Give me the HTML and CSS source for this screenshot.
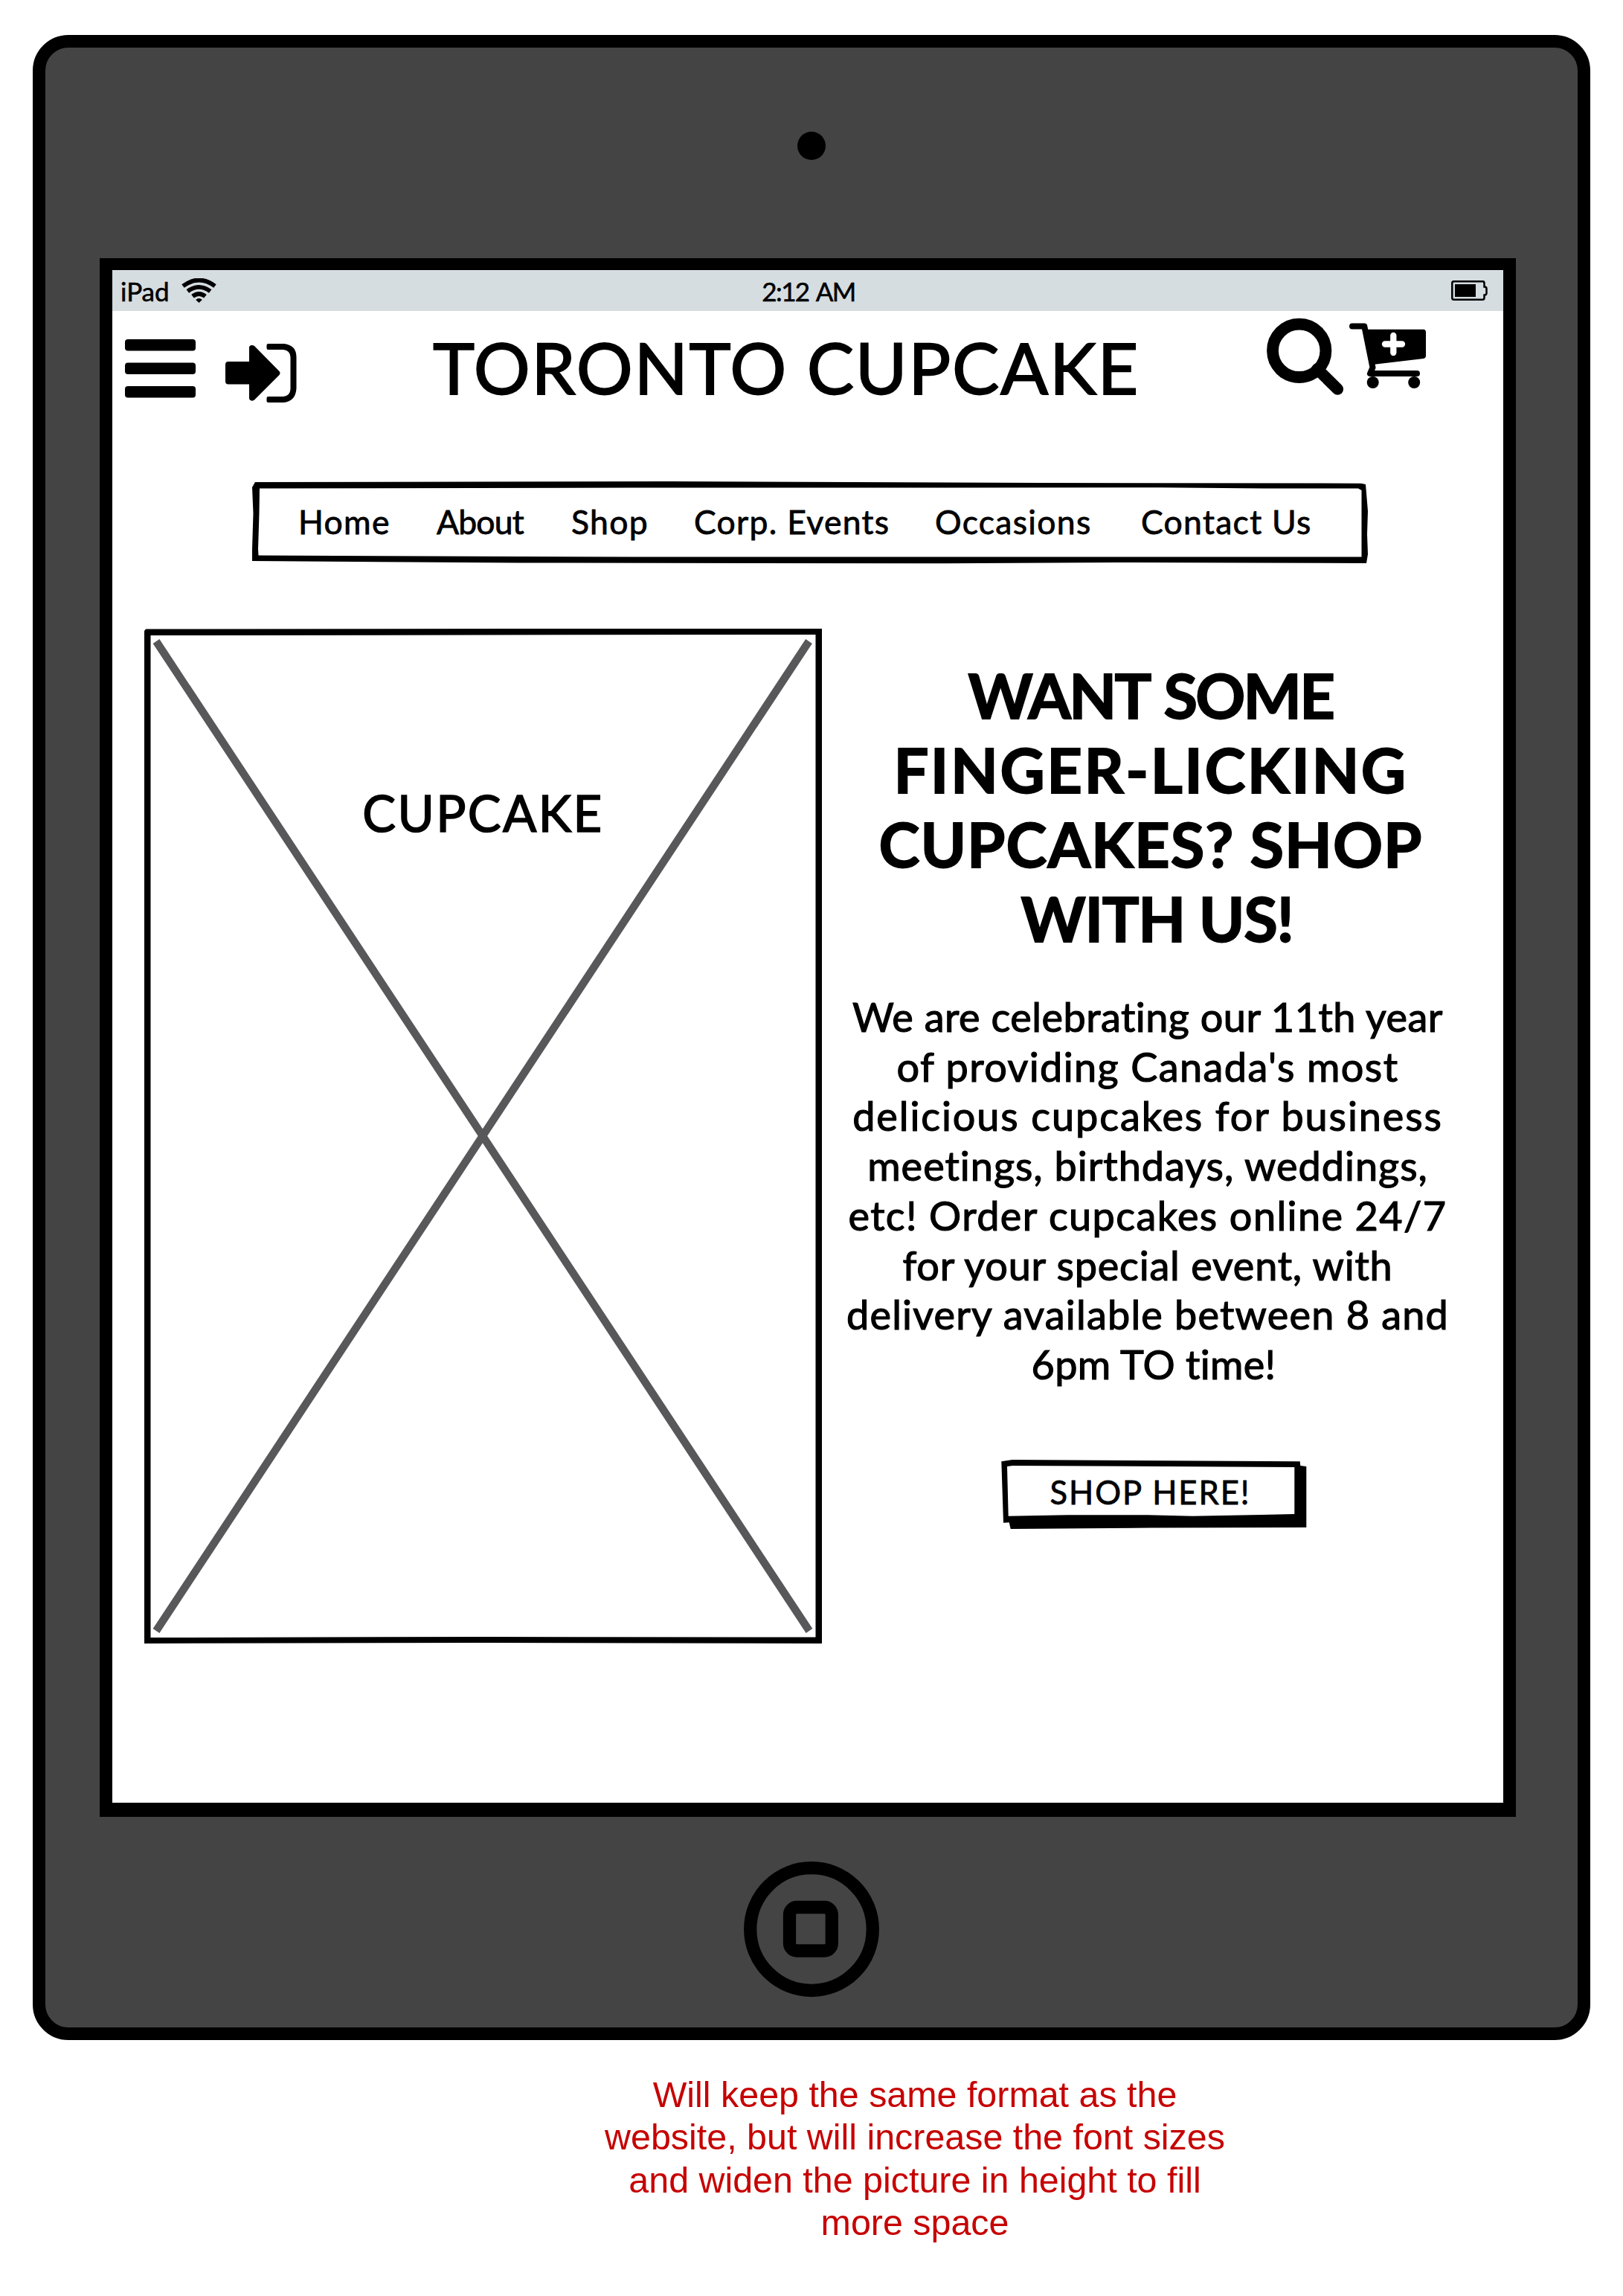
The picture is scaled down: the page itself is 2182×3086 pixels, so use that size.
FILE: index.html
```html
<!DOCTYPE html>
<html lang="en">
<head>
<meta charset="utf-8">
<title>Toronto Cupcake</title>
<link rel="stylesheet" href="styles.css">
</head>
<body>
<div class="device">
  <div class="camera"></div>
  <div class="screen">
    <div class="status">
      <div class="status-left">
        <span>iPad</span>
        <svg class="wifi" width="47" height="34" viewBox="0 0 47 34" fill="none" stroke="#000" stroke-width="5.8">
          <path d="M2 10.5Q23.500 -5.500 45 10.500M8.300 17.500Q23.500 6.300 38.700 17.500M15 24.300Q23.500 17.700 32 24.300"/>
          <path d="M19.200 29Q23.500 25.200 27.800 29L23.500 33Z" fill="#000" stroke="none"/>
        </svg>
      </div>
      <span class="time">2:12 AM</span>
      <svg class="battery" width="49" height="28" viewBox="0 0 49 28">
        <path d="M4 1.200H42Q44.500 1.200 44.500 3.500V8.500H45.500Q47.500 9 47.500 11V17Q47.500 19 45.500 19.500H44.500V23.500Q44.500 25.800 42 25.800H4Q1.300 25.800 1.300 23.500V3.500Q1.300 1.200 4 1.200Z" fill="none" stroke="#000" stroke-width="2.500"/>
        <rect x="5" y="5" width="28" height="17"/>
      </svg>
    </div>

    <header class="header">
      <svg class="menu" width="95" height="80" viewBox="0 0 95 80">
        <rect width="95" height="15.500" rx="4"/><rect y="31.500" width="95" height="15.500" rx="4"/><rect y="63" width="95" height="15.500" rx="4"/>
      </svg>
      <svg class="login" width="96" height="80" viewBox="0 0 96 80">
        <path d="M4 24H32V5Q32 2.500 35 2Q37.500 1.800 39 3L72.500 37Q74.500 39.500 72.500 42L39 75.500Q37 77 35 76.500Q32 75.500 32 73V54.500H4Q0 54.500 0 50.500V28Q0 24 4 24Z"/>
        <path d="M57.500 0H79Q95.500 2 95.500 18V60Q94.500 77 79 79H57.500Q55.500 79 55.500 77V73Q55.500 71 57.500 71H78Q87 70 87.500 61V18Q87 9 78 8H57.500Q55.500 8 55.500 6V2Q55.500 0 57.500 0Z"/>
      </svg>
      <h1 class="title">TORONTO CUPCAKE</h1>
      <svg class="search" width="104" height="105" viewBox="0 0 104 105" fill="none" stroke="#000">
        <circle cx="43.700" cy="44.300" r="35.700" stroke-width="15.800"/>
        <path d="M68 69L95.300 96" stroke-width="15.600" stroke-linecap="round"/>
      </svg>
      <svg class="cart" width="104" height="88" viewBox="0 0 104 88">
        <path d="M4 4.500H20.300L31.500 60L28 68H91" fill="none" stroke="#000" stroke-width="8" stroke-linecap="round" stroke-linejoin="round"/>
        <path d="M20 8.700H99.500Q103 9 103 12.500V44Q103 47.500 99.500 48L34 55.700L28 55Z"/>
        <circle cx="31.700" cy="80" r="8"/><circle cx="87.200" cy="80" r="8"/>
        <path d="M59.300 17V40M48 28.500H71" stroke="#fff" stroke-width="8.300" stroke-linecap="round"/>
      </svg>
    </header>

    <nav class="nav">
      <svg class="sketch" width="1503" height="111" viewBox="337 647 1503 111">
        <path fill-rule="evenodd" d="M343 648L900 647L1400 649L1830 649.700L1836 651L1839 687L1838 718L1839 745L1837 757L1500 756L1250 757.300L700 756.500L550 755.500L339 754V738L340.500 690L339 655ZM349 656.500L850 655.500H1100L1560 655.300L1700 656.500H1826L1830.500 659V748.500H850L450 747L347.500 746.500L347 738L348.500 690Z"/>
      </svg>
      <a>Home</a><a class="tight">About</a><a>Shop</a><a>Corp. Events</a><a>Occasions</a><a>Contact Us</a>
    </nav>

    <main class="main">
      <div class="picture">
        <svg class="sketch" width="911" height="1364" viewBox="194 845 911 1364">
          <path d="M210 862L1088 2192M1087.500 862L210 2192" stroke="#58585a" stroke-width="10.500"/>
          <path fill-rule="evenodd" d="M196 845.500L700 845L1105 844V2209L650 2208L194 2209V848ZM202.500 854L1096.500 853V2200.500L650 2200L202.500 2201Z"/>
        </svg>
        <span class="picture-label">CUPCAKE</span>
      </div>
      <section class="copy">
        <h2 class="pitch"><span>WANT SOME</span><span>FINGER-LICKING</span><span>CUPCAKES? SHOP</span><span>WITH US!</span></h2>
        <p class="story"><span>We are celebrating our 11th year</span><span>of providing Canada's most</span><span>delicious cupcakes for business</span><span>meetings, birthdays, weddings,</span><span>etc! Order cupcakes online 24/7</span><span>for your special event, with</span><span>delivery available between 8 and</span><span>6pm TO time!</span></p>
        <a class="shop">
          <svg class="sketch" width="411" height="93" viewBox="0 0 411 93">
            <path fill-rule="evenodd" d="M.3 2.300L15 0L401.700 2.300L402.300 8L410.300 9V91L200 91.500L12.700 93L10.700 84.300L3 84.700ZM8 9L15.300 8L394.300 10V73L350 74L257 75.700L197 74.300H90L9.700 75.700Z"/>
          </svg>
          <span>SHOP HERE!</span>
        </a>
      </section>
    </main>
  </div>
  <svg class="home" width="182" height="182" viewBox="0 0 182 182" fill="none" stroke="#000" stroke-width="17.300">
    <circle cx="91" cy="91" r="82.300"/>
    <rect x="61.500" y="61.500" width="56.800" height="58.500" rx="10"/>
  </svg>
</div>
<p class="note">Will keep the same format as the<br>website, but will increase the font sizes<br>and widen the picture in height to fill<br>more space</p>
</body>
</html>
```
FILE: styles.css
```css
* { box-sizing: border-box; }
body {
  margin: 0;
  padding: 47px 44px 0;
  background: #fff;
  color: #000;
  font-family: Lato, sans-serif;
}
svg { display: block; flex: none; }
h1, h2, p { margin: 0; font-weight: 400; }

.device {
  width: 2094px;
  height: 2695px;
  border: 17px solid #000;
  border-radius: 48px;
  background: #444;
  display: flex;
  flex-direction: column;
  align-items: center;
}
.camera {
  width: 38px;
  height: 38px;
  margin-top: 113px;
  border-radius: 50%;
  background: #000;
}
.screen {
  align-self: flex-start;
  width: 1904px;
  height: 2095px;
  margin: 132px 0 0 73px;
  border: solid #000;
  border-width: 16px 17px 19px;
  background: #fff;
}
.home { margin-top: 60px; }

.status {
  height: 55px;
  padding: 0 21px 0 11px;
  background: #d6dde0;
  display: grid;
  grid-template-columns: 1fr auto 1fr;
  align-items: center;
  font-size: 35px;
  line-height: 52px;
  -webkit-text-stroke: .6px #000;
}
.status-left { display: flex; align-items: center; gap: 16px; }
.time { letter-spacing: -1.6px; word-spacing: 3px; margin-left: 12px; }
.battery { justify-self: end; }

.header {
  height: 229px;
  padding: 0 103px 0 17px;
  display: flex;
  align-items: flex-start;
}
.menu { margin-top: 38px; }
.login { margin: 44px 0 0 40px; }
.title {
  flex: 1;
  margin: 25px 0 0 183px;
  font-size: 95px;
  line-height: 100px;
  letter-spacing: 1.6px;
  white-space: nowrap;
  -webkit-text-stroke: 1.8px #000;
}
.search { margin-top: 9px; }
.cart { margin: 16px 0 0 7px; }

.sketch { position: absolute; inset: 0; }
.nav {
  position: relative;
  width: 1503px;
  height: 111px;
  margin-left: 186px;
  padding-left: 64px;
  display: grid;
  grid-template-columns: 186px 181px 165px 324px 277px auto;
  font-size: 44.500px;
  line-height: 108px;
  letter-spacing: 1.3px;
  white-space: nowrap;
  -webkit-text-stroke: .8px #000;
}
.nav .tight { letter-spacing: -.8px; }

.main {
  display: flex;
  margin: 87px 0 0 43px;
  gap: 18px;
}
.picture {
  position: relative;
  width: 911px;
  height: 1364px;
  padding-top: 207px;
  text-align: center;
}
.picture-label {
  position: relative;
  font-size: 67px;
  line-height: 80px;
  letter-spacing: 2.4px;
  -webkit-text-stroke: 1.6px #000;
}
.copy {
  width: 840px;
  padding-top: 39px;
  display: flex;
  flex-direction: column;
  align-items: center;
  text-align: center;
  white-space: nowrap;
}
.copy span { display: block; }
.pitch {
  padding-left: 8px;
  font-size: 83px;
  font-weight: 700;
  line-height: 100px;
  -webkit-text-stroke: 1.8px #000;
}
.pitch span:nth-child(1) { letter-spacing: -2.7px; word-spacing: 4px; }
.pitch span:nth-child(2) { letter-spacing: 2.5px; }
.pitch span:nth-child(3) { letter-spacing: 1px; }
.pitch span:nth-child(4) { letter-spacing: -1.3px; padding-left: 17px; }
.story {
  margin-top: 50px;
  font-size: 54px;
  line-height: 66.700px;
  -webkit-text-stroke: 1.2px #000;
}
.story span:nth-child(1) { letter-spacing: .5px; }
.story span:nth-child(2) { letter-spacing: 1.4px; }
.story span:nth-child(3) { letter-spacing: 1.9px; }
.story span:nth-child(4) { letter-spacing: 1px; }
.story span:nth-child(5) { letter-spacing: 1.4px; }
.story span:nth-child(6) { letter-spacing: .8px; }
.story span:nth-child(7) { letter-spacing: 1.2px; }
.story span:nth-child(8) { letter-spacing: .3px; padding-left: 16px; }
.shop {
  position: relative;
  width: 411px;
  height: 93px;
  margin: 94px 0 0 17px;
  padding-right: 10px;
  font-size: 43.500px;
  line-height: 86px;
  letter-spacing: 2px;
  -webkit-text-stroke: .8px #000;
}

.note {
  width: 900px;
  margin: 45px 0 0 736px;
  color: #c60000;
  font: 48.400px/57.400px "Liberation Sans", sans-serif;
  text-align: center;
  white-space: nowrap;
}
```
